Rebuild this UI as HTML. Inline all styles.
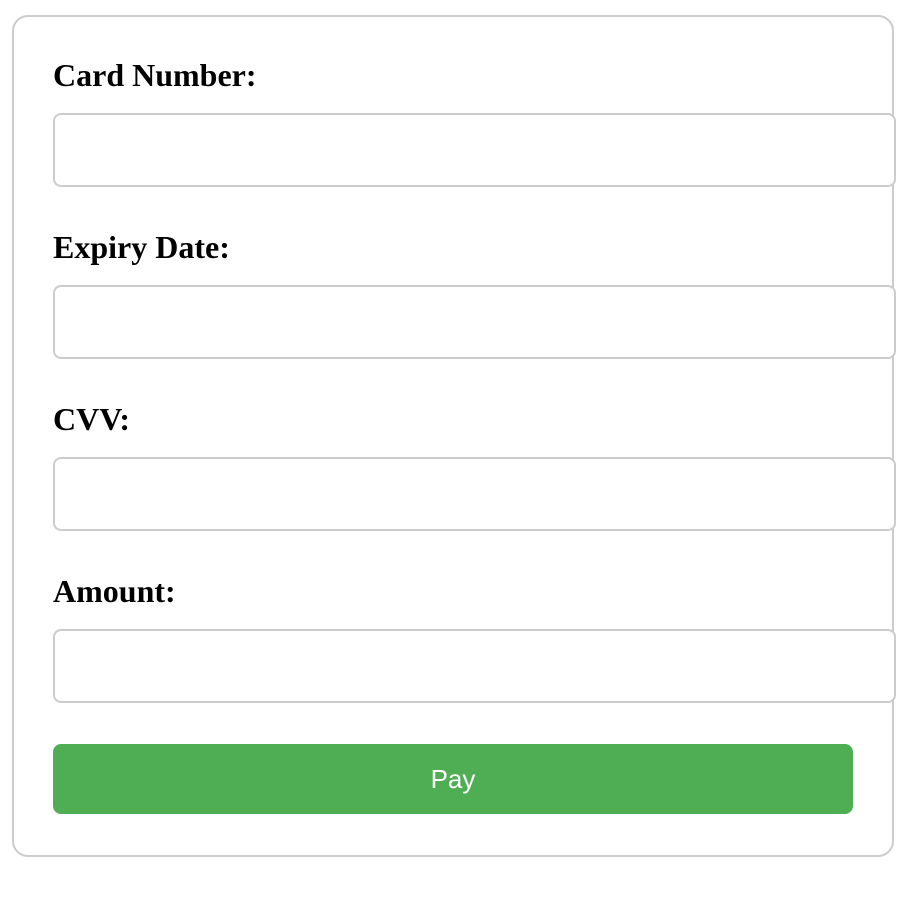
<!DOCTYPE html>
<html><head><style>
body{margin:0;background:#fff;width:906px;height:922px;position:relative;overflow:hidden}
.box{position:absolute;left:12px;top:15px;width:878px;height:838px;border:2px solid #ccc;border-radius:16px}
.lbl{position:absolute;left:53px;font:bold 32px "Liberation Serif",serif;color:#000;line-height:36px}
.inp{position:absolute;left:53px;width:839px;height:70px;border:2px solid #ccc;border-radius:8px;background:#fff}
.btn{position:absolute;left:53px;top:744px;width:800px;height:70px;background:#4fae53;border-radius:8px;color:#fff;font:26px "Liberation Sans",sans-serif;text-align:center;line-height:70px}
</style></head><body>
<div class="box"></div>
<div class="lbl" style="top:57px">Card Number:</div>
<div class="inp" style="top:113px"></div>
<div class="lbl" style="top:229px">Expiry Date:</div>
<div class="inp" style="top:285px"></div>
<div class="lbl" style="top:401px">CVV:</div>
<div class="inp" style="top:457px"></div>
<div class="lbl" style="top:573px">Amount:</div>
<div class="inp" style="top:629px"></div>
<div class="btn">Pay</div>
</body></html>
